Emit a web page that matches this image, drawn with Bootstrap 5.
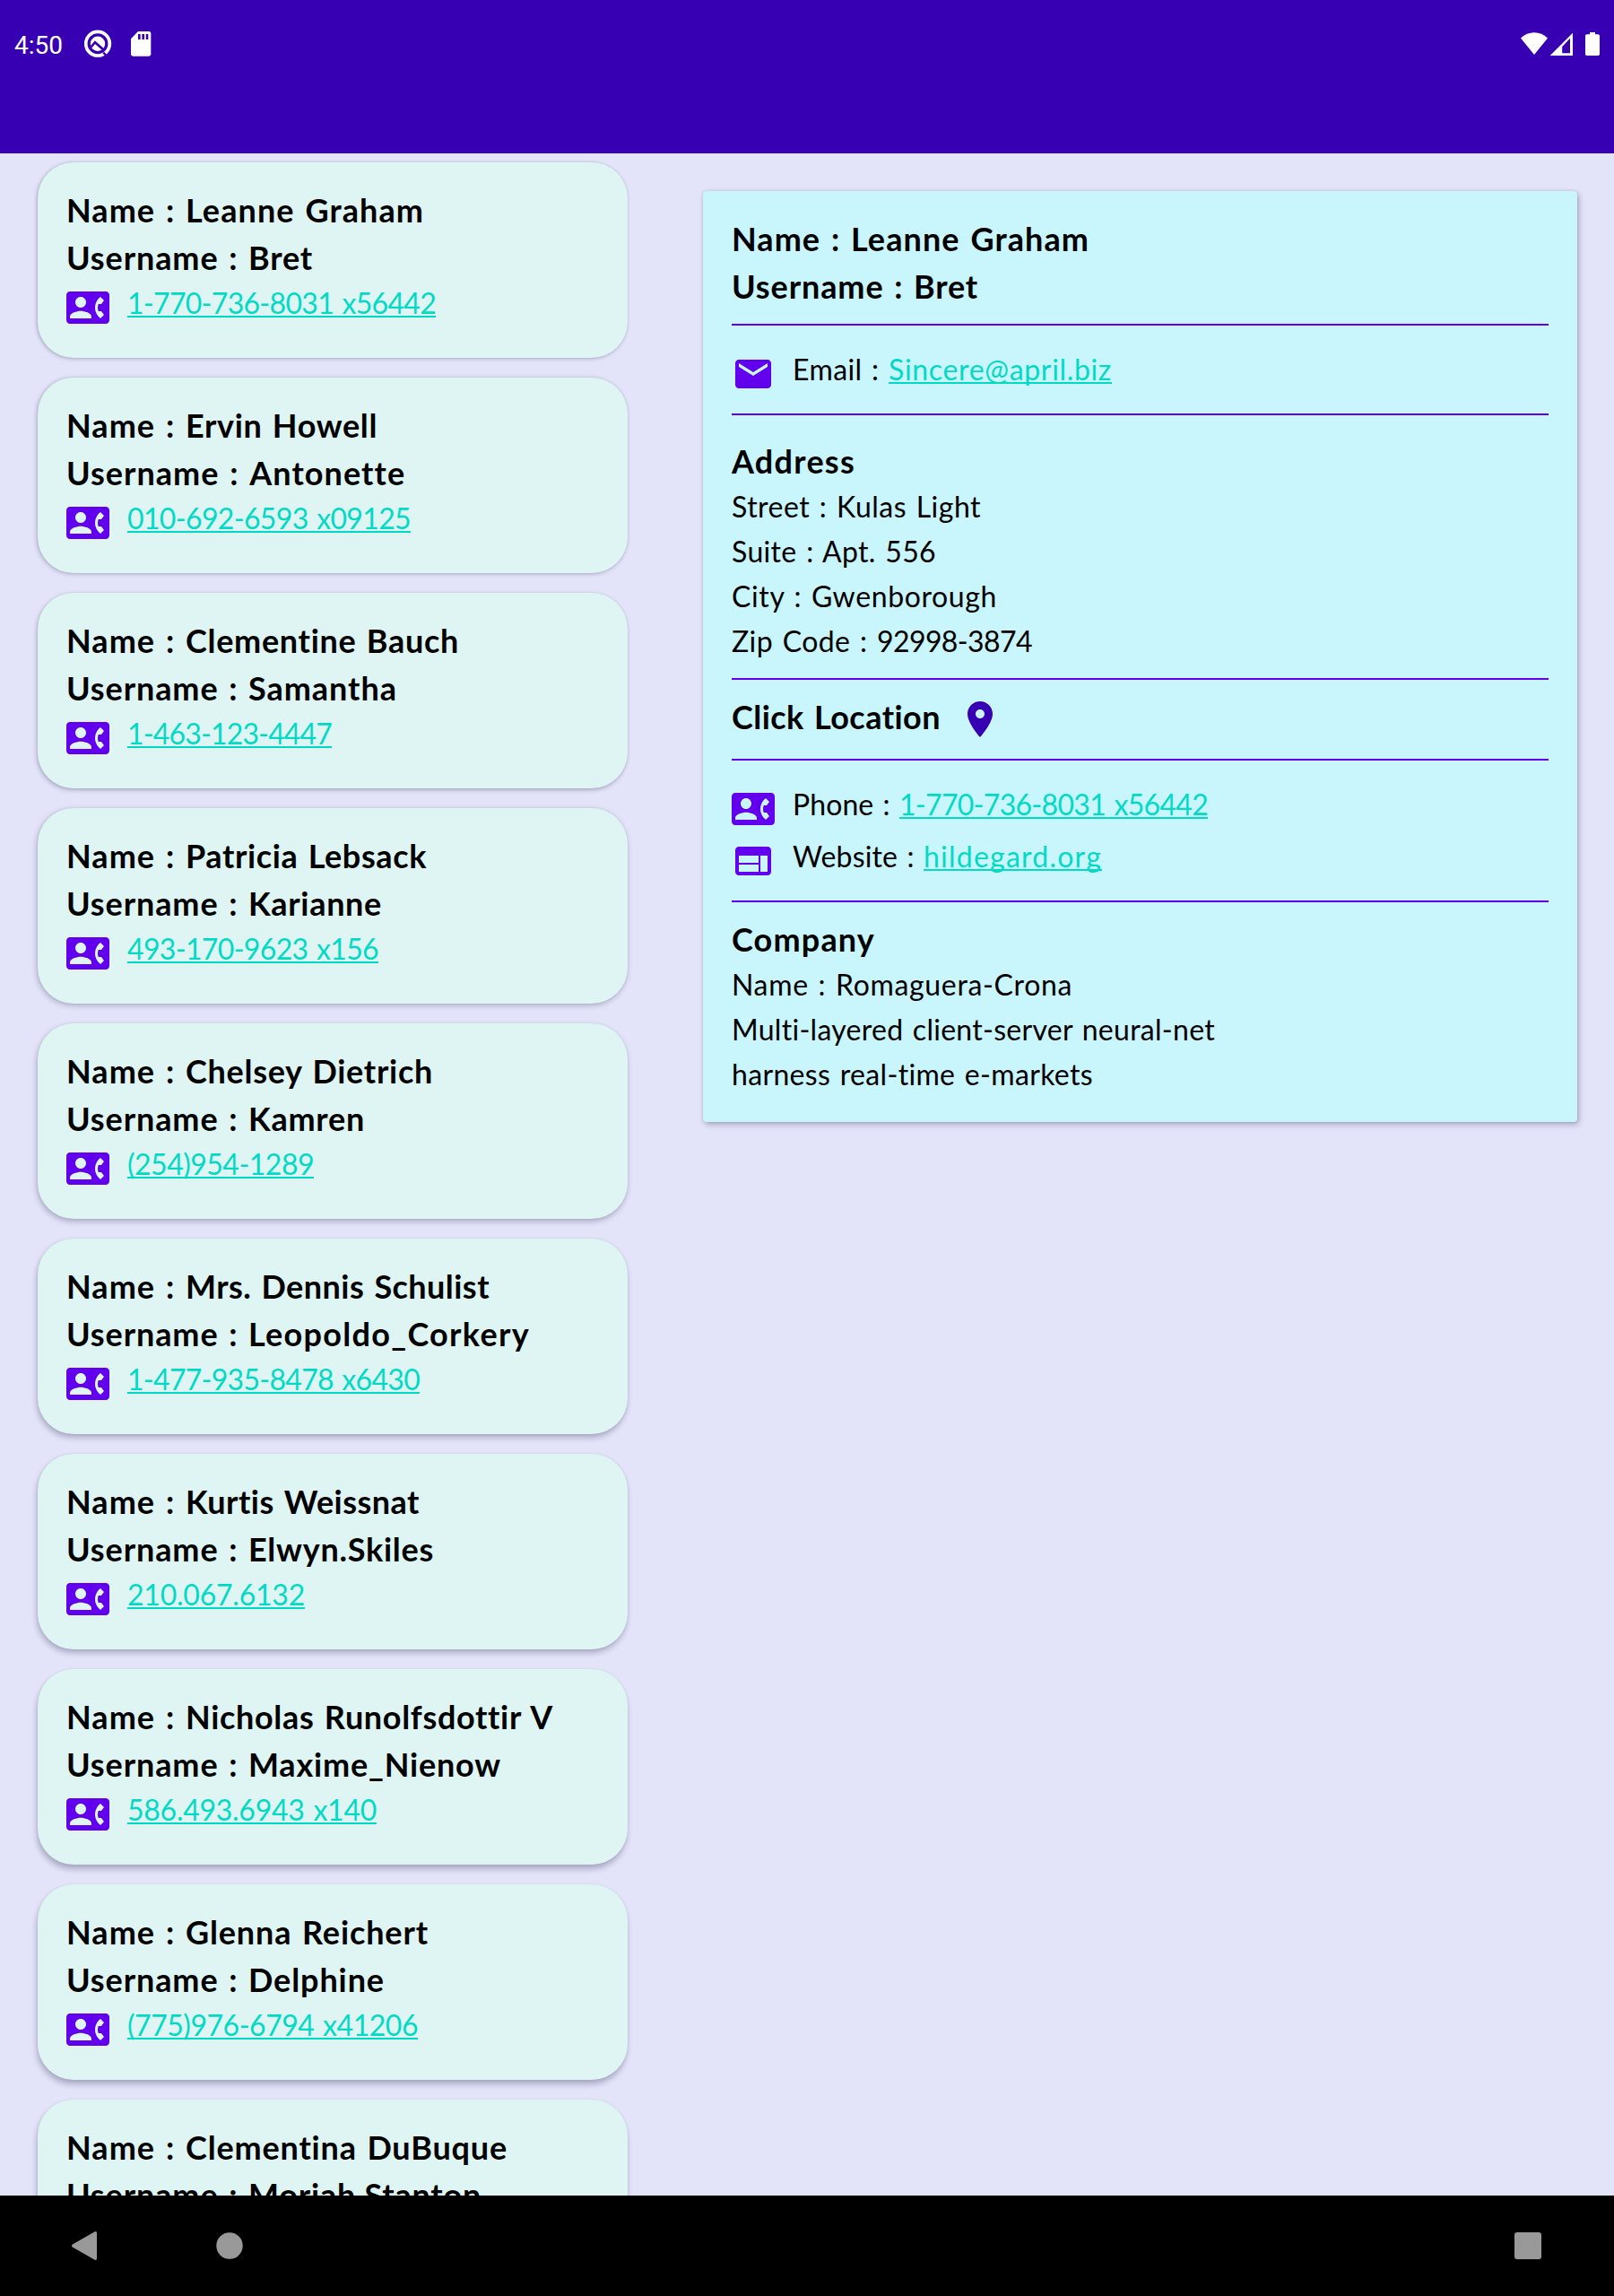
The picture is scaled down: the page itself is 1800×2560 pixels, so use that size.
<!DOCTYPE html>
<html lang="en">
<head>
<meta charset="utf-8">
<meta name="viewport" content="width=device-width, initial-scale=1">
<title>Users</title>
<link href="https://cdn.jsdelivr.net/npm/bootstrap@5.3.0/dist/css/bootstrap.min.css" rel="stylesheet">
<style>
  body { font-family: Lato, "Noto Sans", sans-serif; color: #000; background: #e3e4fa; font-variant-ligatures: none; }
  .screen { width: 1800px; height: 2560px; }
  .app-top { height: 171px; background: #3700b3; color: #fff; padding: 32px 14px 0 16px; z-index: 2; }
  .clock { font: 400 28px/30px Roboto, sans-serif; width: 78px; margin-top: 4px; }
  .sys-icon { display: block; flex: none; fill: #fff; }
  .list-pane { width: 742px; padding: 10px 42px 0; gap: 22px; }
  .user-card { height: 218px; flex: none; background: #dff5f3; border: 0; border-radius: 40px; padding: 27px 32px 0;
    box-shadow: -1px var(--drop) var(--soft) rgba(30, 20, 60, .28), 0 0 2px rgba(30, 20, 60, .1); }
  .user-card:nth-child(1) { --drop: 1px; --soft: 4px; }
  .user-card:nth-child(2) { --drop: 1px; --soft: 5px; }
  .user-card:nth-child(3) { --drop: 2px; --soft: 5px; }
  .user-card:nth-child(4) { --drop: 2px; --soft: 6px; }
  .user-card:nth-child(5) { --drop: 3px; --soft: 6px; }
  .user-card:nth-child(6) { --drop: 4px; --soft: 6px; }
  .user-card:nth-child(7) { --drop: 4px; --soft: 6px; }
  .user-card:nth-child(8) { --drop: 5px; --soft: 6px; }
  .user-card:nth-child(9) { --drop: 5px; --soft: 6px; }
  .user-card:nth-child(10) { --drop: 5px; --soft: 6px; }
  .detail-pane { padding: 42px 41px 0 42px; }
  .detail-card { width: 975px; height: 1038px; background: #c9f5fd; border: 0; border-radius: 4px; padding: 27px 32px 0;
    box-shadow: 2px 3px 6px rgba(30, 20, 60, .28), 0 0 3px rgba(30, 20, 60, .15); }
  .strong-line { font-size: 36px; line-height: 53px; font-weight: 700; white-space: pre; word-spacing: 2px; }
  .plain-line { font-size: 32px; line-height: 50px; white-space: pre; word-spacing: 2px; }
  .icon-line { height: 54px; font-size: 32px; line-height: 48px; gap: 20px; white-space: pre; word-spacing: 2px; }
  .glyph { display: block; flex: none; width: 48px; height: 48px; margin-top: 5px; fill: #6200ee; }
  .glyph-pin { fill: #3700b3; }
  .icon-line a { color: #03dac5; text-decoration: underline; text-decoration-thickness: 2px; text-underline-offset: 2px; text-decoration-skip-ink: none; }
  .rule { height: 2px; background: #6200ee; }
  .gap-a { margin-top: 15px; } .gap-b { margin-top: 19px; } .gap-c { margin-top: 25px; } .gap-d { margin-top: 15px; } .gap-e { margin-top: 16px; }
  .pull { margin-top: -1px; }
  .nav-keys { height: 112px; background: #000; z-index: 2; padding: 40px 80px 0; }
  .nav-keys svg { display: block; fill: #999; }
  .home-key { margin-left: 133px; }
</style>
</head>
<body>
<svg class="d-none" aria-hidden="true">
  <symbol id="contact" viewBox="0 0 24 24"><path d="M22 3H2C.9 3 0 3.900 0 5v14c0 1.100.9 2 2 2h20c1.100 0 1.990-.9 1.990-2L24 5c0-1.100-.9-2-2-2zM8 6c1.660 0 3 1.340 3 3s-1.340 3-3 3-3-1.340-3-3 1.340-3 3-3zm6 12H2v-1c0-2 4-3.100 6-3.100s6 1.100 6 3.100v1zm3.850-4h1.640L21 16l-1.990 1.990c-1.310-.98-2.280-2.380-2.730-3.990-.18-.64-.28-1.310-.28-2s.1-1.360.28-2c.45-1.620 1.420-3.010 2.730-3.990L21 8l-1.510 2h-1.640c-.22.63-.35 1.300-.35 2s.13 1.370.35 2z"/></symbol>
</svg>
<div class="screen d-flex flex-column overflow-hidden">
  <header class="app-top d-flex align-items-start flex-shrink-0 position-relative">
    <span class="clock">4:50</span>
    <svg class="sys-icon" width="32" height="34" viewBox="94 32 32 34">
      <circle cx="109" cy="48.700" r="13.300" fill="none" stroke="#fff" stroke-width="3.700"/>
      <circle cx="109" cy="48.700" r="8.200"/>
      <path d="M101.500 52.500 106 47.200 116.500 56.500" fill="none" stroke="#3700b3" stroke-width="2.600"/>
      <path d="M115.300 58.500 120 64" fill="none" stroke="#3700b3" stroke-width="2.400"/>
    </svg>
    <svg class="sys-icon ms-3" width="32" height="34" viewBox="142 32 32 34">
      <path d="M154 35h12q2.300 0 2.300 2.300v23q0 2.400-2.300 2.400h-17.600q-2.400 0-2.400-2.400V43.300z"/>
      <path d="M154 38h2.600v6H154zm4.400 0h2.600v6h-2.600zm4.400 0h2.500v6h-2.500z" fill="#3700b3"/>
    </svg>
    <svg class="sys-icon ms-auto" width="92" height="34" viewBox="1694 32 92 34">
      <path d="M1696 42.600Q1702.500 36.200 1711 36.200T1726 42.600L1711 61z"/>
      <path d="M1754 36.700V62h-25.300zM1751 42.800l-8.800 9.200v7.200h8.800z" fill-rule="evenodd"/>
      <path d="M1773 36h6v2.200h3.200q1.800 0 1.800 1.800v20.200q0 1.800-1.800 1.800h-12.400q-1.800 0-1.800-1.800V40q0-1.800 1.800-1.800h3.200z"/>
    </svg>
  </header>

  <main class="d-flex flex-grow-1 overflow-hidden">
    <section class="list-pane d-flex flex-column flex-shrink-0">
      <article class="card user-card">
        <div class="strong-line"><span data-w="133">Name : </span><span data-w="266">Leanne Graham</span></div>
        <div class="strong-line"><span data-w="203">Username : </span><span data-w="72">Bret</span></div>
        <div class="icon-line d-flex"><svg class="glyph"><use href="#contact"/></svg><a href="#" data-w="344">1-770-736-8031 x56442</a></div>
      </article>
      <article class="card user-card">
        <div class="strong-line"><span data-w="133">Name : </span><span data-w="214">Ervin Howell</span></div>
        <div class="strong-line"><span data-w="203">Username : </span><span data-w="174">Antonette</span></div>
        <div class="icon-line d-flex"><svg class="glyph"><use href="#contact"/></svg><a href="#" data-w="316">010-692-6593 x09125</a></div>
      </article>
      <article class="card user-card">
        <div class="strong-line"><span data-w="133">Name : </span><span data-w="305">Clementine Bauch</span></div>
        <div class="strong-line"><span data-w="203">Username : </span><span data-w="166">Samantha</span></div>
        <div class="icon-line d-flex"><svg class="glyph"><use href="#contact"/></svg><a href="#" data-w="228">1-463-123-4447</a></div>
      </article>
      <article class="card user-card">
        <div class="strong-line"><span data-w="133">Name : </span><span data-w="269">Patricia Lebsack</span></div>
        <div class="strong-line"><span data-w="203">Username : </span><span data-w="149">Karianne</span></div>
        <div class="icon-line d-flex"><svg class="glyph"><use href="#contact"/></svg><a href="#" data-w="280">493-170-9623 x156</a></div>
      </article>
      <article class="card user-card">
        <div class="strong-line"><span data-w="133">Name : </span><span data-w="276">Chelsey Dietrich</span></div>
        <div class="strong-line"><span data-w="203">Username : </span><span data-w="130">Kamren</span></div>
        <div class="icon-line d-flex"><svg class="glyph"><use href="#contact"/></svg><a href="#" data-w="208">(254)954-1289</a></div>
      </article>
      <article class="card user-card">
        <div class="strong-line"><span data-w="133">Name : </span><span data-w="339">Mrs. Dennis Schulist</span></div>
        <div class="strong-line"><span data-w="203">Username : </span><span data-w="314">Leopoldo_Corkery</span></div>
        <div class="icon-line d-flex"><svg class="glyph"><use href="#contact"/></svg><a href="#" data-w="326">1-477-935-8478 x6430</a></div>
      </article>
      <article class="card user-card">
        <div class="strong-line"><span data-w="133">Name : </span><span data-w="261">Kurtis Weissnat</span></div>
        <div class="strong-line"><span data-w="203">Username : </span><span data-w="207">Elwyn.Skiles</span></div>
        <div class="icon-line d-flex"><svg class="glyph"><use href="#contact"/></svg><a href="#" data-w="198">210.067.6132</a></div>
      </article>
      <article class="card user-card">
        <div class="strong-line"><span data-w="133">Name : </span><span data-w="410">Nicholas Runolfsdottir V</span></div>
        <div class="strong-line"><span data-w="203">Username : </span><span data-w="282">Maxime_Nienow</span></div>
        <div class="icon-line d-flex"><svg class="glyph"><use href="#contact"/></svg><a href="#" data-w="278">586.493.6943 x140</a></div>
      </article>
      <article class="card user-card">
        <div class="strong-line"><span data-w="133">Name : </span><span data-w="271">Glenna Reichert</span></div>
        <div class="strong-line"><span data-w="203">Username : </span><span data-w="152">Delphine</span></div>
        <div class="icon-line d-flex"><svg class="glyph"><use href="#contact"/></svg><a href="#" data-w="324">(775)976-6794 x41206</a></div>
      </article>
      <article class="card user-card">
        <div class="strong-line"><span data-w="133">Name : </span><span data-w="359">Clementina DuBuque</span></div>
        <div class="strong-line"><span data-w="203">Username : </span><span data-w="260">Moriah.Stanton</span></div>
      </article>
    </section>

    <section class="detail-pane">
      <article class="card detail-card">
        <div class="strong-line"><span data-w="133">Name : </span><span data-w="266">Leanne Graham</span></div>
        <div class="strong-line"><span data-w="203">Username : </span><span data-w="72">Bret</span></div>
        <div class="rule gap-a"></div>
        <div class="icon-line d-flex gap-c"><svg class="glyph" viewBox="0 0 24 24"><path d="M20 4H4c-1.100 0-1.990.9-1.990 2L2 18c0 1.100.9 2 2 2h16c1.100 0 2-.9 2-2V6c0-1.100-.9-2-2-2zm0 4l-8 5-8-5V6l8 5 8-5v2z"/></svg><div><span data-w="107">Email : </span><a href="#" data-w="249">Sincere@april.biz</a></div></div>
        <div class="rule gap-b"></div>
        <div class="strong-line gap-c"><span data-w="138">Address</span></div>
        <div class="plain-line pull"><span data-w="278">Street : Kulas Light</span></div>
        <div class="plain-line"><span data-w="228">Suite : Apt. 556</span></div>
        <div class="plain-line"><span data-w="296">City : Gwenborough</span></div>
        <div class="plain-line"><span data-w="162">Zip Code : </span><span data-w="173">92998-3874</span></div>
        <div class="rule gap-e"></div>
        <div class="icon-line d-flex gap-d"><div class="strong-line"><span data-w="233">Click Location</span></div><svg class="glyph glyph-pin" viewBox="0 0 24 24"><path d="M12 2C8.130 2 5 5.130 5 9c0 5.250 7 13 7 13s7-7.750 7-13c0-3.870-3.130-7-7-7zm0 9.500c-1.380 0-2.500-1.120-2.500-2.500s1.120-2.500 2.500-2.500 2.500 1.120 2.500 2.500-1.120 2.500-2.500 2.500z"/></svg></div>
        <div class="rule gap-b"></div>
        <div class="icon-line d-flex gap-c"><svg class="glyph"><use href="#contact"/></svg><div><span data-w="119">Phone : </span><a href="#" data-w="344">1-770-736-8031 x56442</a></div></div>
        <div class="icon-line d-flex mt-1"><svg class="glyph" viewBox="0 0 24 24"><path d="M20 4H4c-1.100 0-1.990.9-1.990 2L2 18c0 1.100.9 2 2 2h16c1.100 0 2-.9 2-2V6c0-1.100-.9-2-2-2zm-5 14H4v-4h11v4zm0-5H4V9h11v4zm5 5h-4V9h4v9z"/></svg><div><span data-w="146">Website : </span><a href="#" data-w="199">hildegard.org</a></div></div>
        <div class="rule gap-b"></div>
        <div class="strong-line gap-d"><span data-w="160">Company</span></div>
        <div class="plain-line pull"><span data-w="380">Name : Romaguera-Crona</span></div>
        <div class="plain-line"><span data-w="539">Multi-layered client-server neural-net</span></div>
        <div class="plain-line"><span data-w="403">harness real-time e-markets</span></div>
      </article>
    </section>
  </main>

  <nav class="nav-keys d-flex flex-shrink-0 position-relative">
    <svg width="28" height="32" viewBox="0 0 28 32"><path d="M25.300.4Q28-.8 28 2v28q0 2.800-2.700 1.600L.8 17.600q-1.600-1.600 0-3.200z"/></svg>
    <svg class="home-key" width="30" height="32" viewBox="0 0 30 32"><circle cx="15" cy="16" r="14.700"/></svg>
    <svg class="ms-auto" width="31" height="32" viewBox="0 0 31 32"><rect x="0" y="1" width="30" height="30" rx="3"/></svg>
  </nav>
</div>
<script src="https://cdn.jsdelivr.net/npm/bootstrap@5.3.0/dist/js/bootstrap.bundle.min.js"></script>
<script>
  // Track each run of text out to its set width.
  document.querySelectorAll('[data-w]').forEach(function (el) {
    var free = Number(el.dataset.w) - el.getBoundingClientRect().width;
    el.style.letterSpacing = (free / el.textContent.length).toFixed(3) + 'px';
  });
</script>
</body>
</html>
